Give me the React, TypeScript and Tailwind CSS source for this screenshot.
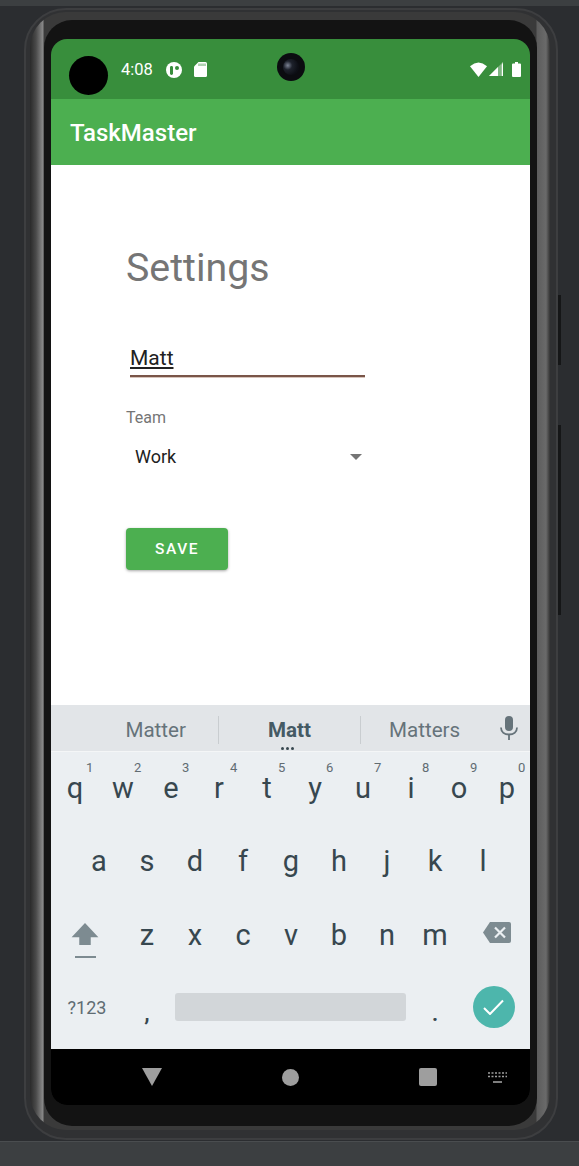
import React from "react";

const rowOne = [
  ["q", "1"], ["w", "2"], ["e", "3"], ["r", "4"], ["t", "5"],
  ["y", "6"], ["u", "7"], ["i", "8"], ["o", "9"], ["p", "0"],
];
const rowTwo = ["a", "s", "d", "f", "g", "h", "j", "k", "l"];
const rowThree = ["z", "x", "c", "v", "b", "n", "m"];

const Key: React.FC<{ letter: string; hint?: string }> = ({ letter, hint }) => (
  <div className="relative flex h-full w-[48px] shrink-0 items-center justify-center text-[29px] leading-none text-[#37474f]">
    {letter}
    {hint && (
      <span className="absolute left-[35px] top-[9px] text-[13px] leading-[14px] text-[#616c72]">
        {hint}
      </span>
    )}
  </div>
);

const StatusBar = () => (
  <div className="flex h-[60px] items-start bg-[#388e3c] pl-[18px] pr-[9px] pt-[17px]">
    <div className="h-[39px] w-[39px] rounded-full bg-black" />
    <span className="ml-[13px] mt-[4px] text-[16.5px] leading-[20px] text-white">4:08</span>
    <svg className="ml-[13px] mt-[6px]" width="16" height="16" viewBox="0 0 16 16">
      <circle cx="8" cy="8" r="8" fill="#fff" />
      <rect x="4" y="4" width="3" height="9" rx="1.4" fill="#388e3c" />
      <circle cx="11" cy="6" r="2" fill="#388e3c" />
    </svg>
    <svg className="ml-[12px] mt-[6px]" width="13" height="15" viewBox="0 0 13 15">
      <path d="M4.5 0H11.5Q13 0 13 1.5V13.5Q13 15 11.5 15H1.5Q0 15 0 13.5V4.5Z" fill="#fff" />
      <path d="M5 1.5V4M7 1.5V4M9 1.5V4M11 1.5V4" stroke="#388e3c" strokeWidth="0.8" />
    </svg>
    <svg className="ml-auto mt-[6px]" width="17" height="15" viewBox="0 0 17 15">
      <path d="M0 4.2Q8.5 -3 17 4.2L8.5 15Z" fill="#fff" />
    </svg>
    <svg className="ml-[2px] mt-[6px]" width="14" height="14" viewBox="0 0 14 14">
      <path d="M14 0V14H0Z" fill="#fff" fillOpacity="0.35" />
      <path d="M9 5V14H0Z" fill="#fff" />
      <path d="M14 0V14H12.8V3Z" fill="#fff" />
    </svg>
    <svg className="ml-[9px] mt-[6px]" width="9" height="15" viewBox="0 0 9 15">
      <path d="M3 0H6V1.5H8Q9 1.5 9 2.5V14Q9 15 8 15H1Q0 15 0 14V2.5Q0 1.5 1 1.5H3Z" fill="#fff" />
    </svg>
  </div>
);

const SettingsForm = () => (
  <div className="flex h-[540px] flex-col bg-white pl-[75px] pt-[79px]">
    <h1 className="text-[39.3px] leading-[48px] text-[#757575]">Settings</h1>
    <div className="ml-[4px] mt-[53px] w-[235px] border-b-2 border-[#795548] pb-[3px] shadow-[0_1px_0_#d7c4bb]">
      <span className="text-[21px] leading-[26px] text-[#212121] underline underline-offset-2">Matt</span>
    </div>
    <label className="mt-[32px] text-[16px] leading-[18px] text-[#757575]">Team</label>
    <div className="mt-[18px] flex w-[236px] items-center justify-between pl-[9px]">
      <span className="text-[18px] leading-[24px] text-[#212121]">Work</span>
      <div className="h-0 w-0 border-x-[6px] border-t-[6px] border-x-transparent border-t-[#757575]" />
    </div>
    <button className="mt-[59px] h-[42px] w-[102px] rounded-[4px] bg-[#4caf50] pt-[2px] text-[15.5px] font-medium tracking-[0.1em] text-white shadow-[0_1px_3px_rgba(0,0,0,0.35)]">
      SAVE
    </button>
  </div>
);

const Suggestions = () => (
  <div className="flex h-[46px] items-center bg-[#e2e5e8] pt-[4px] text-[20.6px] text-[#66737a]">
    <div className="flex h-[28px] w-[168px] items-center justify-end border-r border-[#c9cdd0] pr-[32px]">Matter</div>
    <div className="relative flex h-[28px] w-[142px] items-center justify-center border-r border-[#c9cdd0] font-bold text-[#455a64]">
      Matt
      <div className="absolute left-[62px] top-[31px] flex gap-[2px]">
        <span className="h-[3px] w-[3px] rounded-full bg-[#37474f]" />
        <span className="h-[3px] w-[3px] rounded-full bg-[#37474f]" />
        <span className="h-[3px] w-[3px] rounded-full bg-[#37474f]" />
      </div>
    </div>
    <div className="ml-[28px]">Matters</div>
    <svg className="ml-[40px] mt-[-4px]" width="18" height="24" viewBox="0 0 18 24">
      <rect x="5" y="0" width="8" height="15" rx="4" fill="#66737a" />
      <path d="M1 11.5C1 16 4.5 18.5 9 18.5S17 16 17 11.5" fill="none" stroke="#66737a" strokeWidth="1.8" />
      <path d="M9 18V24" stroke="#66737a" strokeWidth="1.8" />
    </svg>
  </div>
);

const Keyboard = () => (
  <div className="h-[298px] border-t border-[#f4f6f7] bg-[#ebeff2]">
    <div className="flex h-[74px] pb-[2px]">
      {rowOne.map(([letter, hint]) => (
        <Key key={letter} letter={letter} hint={hint} />
      ))}
    </div>
    <div className="flex h-[73px] pb-[2px] pl-[24px]">
      {rowTwo.map((letter) => (
        <Key key={letter} letter={letter} />
      ))}
    </div>
    <div className="flex h-[74px] pb-[2px]">
      <div className="flex w-[72px] shrink-0 flex-col items-center justify-center pr-[4px] pt-[10px]">
        <svg width="28" height="22" viewBox="0 0 28 23">
          <path d="M14 0L28 15H20V23H8V15H0Z" fill="#7d8b91" />
        </svg>
        <div className="mt-[11px] h-[2px] w-[21px] bg-[#7d8b91]" />
      </div>
      {rowThree.map((letter) => (
        <Key key={letter} letter={letter} />
      ))}
      <div className="flex w-[72px] shrink-0 items-start justify-center pl-[4px] pt-[23px]">
        <svg width="28" height="21" viewBox="0 0 28 21">
          <path d="M7 0H26Q28 0 28 2V19Q28 21 26 21H7L0 10.5Z" fill="#7d8b91" />
          <path d="M12 5.5L22 15.5M22 5.5L12 15.5" stroke="#ebeff2" strokeWidth="2.2" />
        </svg>
      </div>
    </div>
    <div className="flex h-[76px] items-start">
      <div className="flex h-[68px] w-[72px] shrink-0 items-center justify-center text-[18px] text-[#5f6c73]">?123</div>
      <div className="flex h-[68px] w-[48px] shrink-0 items-center justify-center pt-[12px] text-[24px] font-medium text-[#37474f]">,</div>
      <div className="flex h-[68px] w-[240px] shrink-0 items-center pl-[4px]">
        <div className="h-[28px] w-[231px] rounded-[3px] bg-[#d2d6d9]" />
      </div>
      <div className="flex h-[68px] w-[48px] shrink-0 items-center justify-center pt-[12px] text-[24px] font-medium text-[#37474f]">.</div>
      <div className="flex h-[68px] flex-1 items-center justify-center pr-[2px]">
        <div className="flex h-[42px] w-[42px] items-center justify-center rounded-full bg-[#4db6ac]">
          <svg width="21" height="16" viewBox="0 0 21 16">
            <path d="M1 9L7 15L20 1.5" fill="none" stroke="#fff" strokeWidth="2" />
          </svg>
        </div>
      </div>
    </div>
  </div>
);

const NavBar = () => (
  <div className="flex h-[56px] items-start rounded-b-[16px] bg-black pl-[91px] pt-[19px]">
    <svg width="20" height="18" viewBox="0 0 20 18">
      <path d="M0 0H20L10 18Z" fill="#9e9e9e" />
    </svg>
    <div className="ml-[120px] mt-[1px] h-[17px] w-[17px] rounded-full bg-[#9e9e9e]" />
    <div className="ml-[120px] h-[18px] w-[18px] rounded-[2px] bg-[#9e9e9e]" />
    <svg className="ml-[51px] mt-[4px]" width="19" height="11" viewBox="0 0 19 11">
      <path d="M0 1H19M0 4.5H19" stroke="#9e9e9e" strokeWidth="1.6" strokeDasharray="2 1.5" />
      <path d="M5 10H14" stroke="#9e9e9e" strokeWidth="1.6" />
    </svg>
  </div>
);

export default function App() {
  return (
    <div className="flex h-[1166px] w-[579px] flex-col overflow-hidden bg-[#2b2d30] font-['Roboto',sans-serif]">
      <div className="h-[6px] shrink-0 bg-[#3c3f41]" />
      <div className="flex-1 pl-[24px] pt-[2px]">
        {/* phone body, layered from the outer rim to the screen */}
        <div className="relative h-[1132px] w-[534px] rounded-[42px] border-2 border-[#3d3e40] bg-[#303133] pb-[6px] pl-[4px] pr-[6px] pt-[2px]">
          <div className="absolute left-[532px] top-[285px] h-[70px] w-[3px] bg-[#151617]" />
          <div className="absolute left-[532px] top-[415px] h-[190px] w-[3px] bg-[#151617]" />
          <div className="h-[1118px] rounded-[36px] bg-[linear-gradient(90deg,#2a2a2a_0px,#4a4a4a_6px,#8a8a8a_13px,#3a3a3a_14px,#3a3a3a_506px,#5c5c5c_507px,#6a6a6a_516px,#333333_520px)] pb-[4px] pl-[14px] pr-[13px] pt-[8px]">
            <div className="h-[1106px] rounded-[28px] bg-[#131313] pb-[21px] pl-[7px] pr-[7px] pt-[19px]">
              <div className="relative h-[1066px] w-[479px] overflow-hidden rounded-[16px]">
                <StatusBar />
                <div className="flex h-[66px] items-center bg-[#4caf50] pl-[19px] pt-[2px] text-[24px] font-medium leading-none text-white">
                  TaskMaster
                </div>
                <SettingsForm />
                <Suggestions />
                <Keyboard />
                <NavBar />
                {/* punch-hole camera */}
                <div className="absolute left-[226px] top-[14px] flex h-[28px] w-[28px] items-center justify-center rounded-full bg-[#0b0c10]">
                  <div className="h-[16px] w-[16px] rounded-full bg-[radial-gradient(circle_at_30%_40%,#7d8494_0%,#1e222c_30%,#0d0f15_70%)]" />
                </div>
              </div>
            </div>
          </div>
        </div>
      </div>
      <div className="h-[25px] shrink-0 border-t border-[#4a4d4f] bg-[#3c3f41]" />
    </div>
  );
}
